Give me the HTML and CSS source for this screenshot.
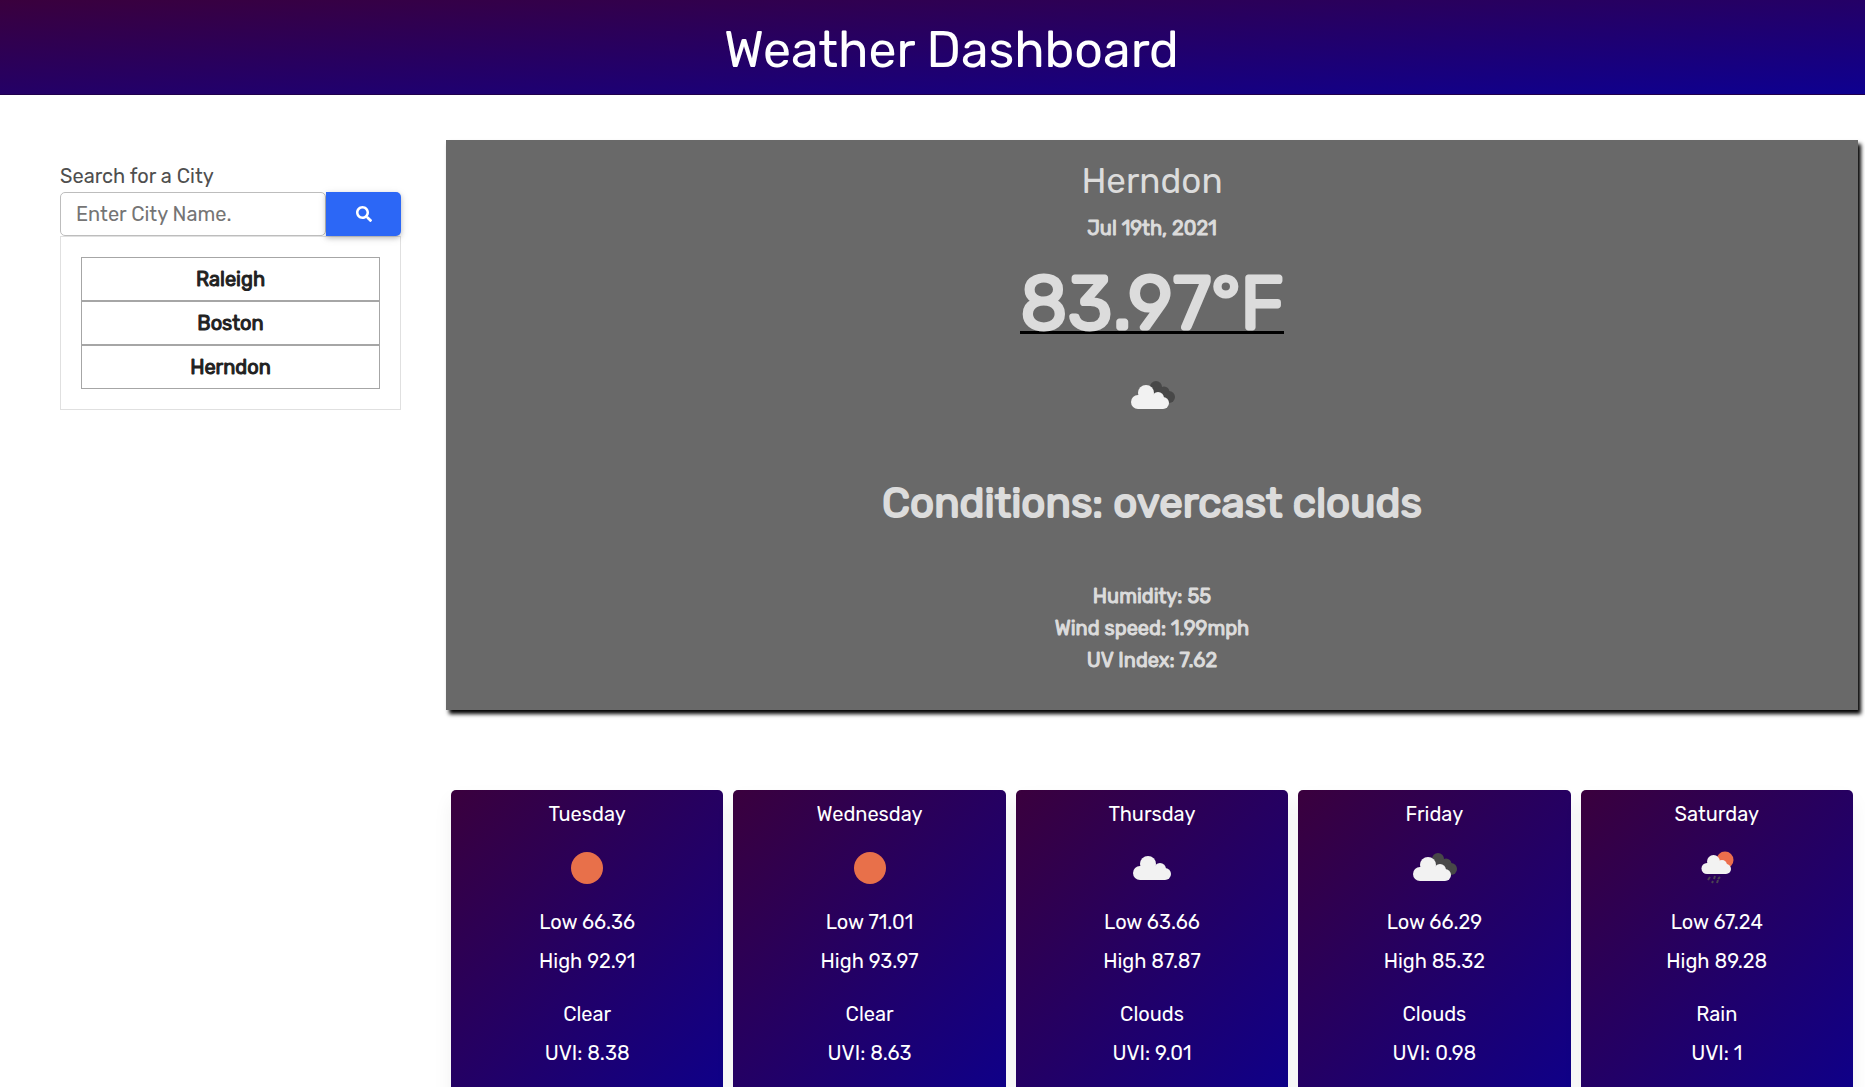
FILE: index.html
```html
<!DOCTYPE html>
<html lang="en">
<head>
<meta charset="utf-8">
<meta name="viewport" content="width=device-width, initial-scale=1">
<title>Weather Dashboard</title>
<link rel="stylesheet" href="styles.css">
</head>
<body>
<svg class="sprite" aria-hidden="true">
  <symbol id="cloud" viewBox="0 0 50 50">
    <g fill="#f2f2f2"><circle cx="21" cy="21" r="8"/><circle cx="33" cy="26" r="6"/><circle cx="13" cy="30" r="7"/><circle cx="38" cy="31" r="6"/><path d="M13 23h22l3 8v6H13z"/></g>
  </symbol>
  <symbol id="clouds" viewBox="0 0 50 50">
    <g fill="#484848"><circle cx="29" cy="16" r="6"/><circle cx="37" cy="21" r="5.500"/><circle cx="42" cy="26" r="6"/><path d="M25 18l10-2 8 8-3 7-12-3z"/></g>
    <g fill="#f2f2f2"><circle cx="19" cy="22" r="8"/><circle cx="31" cy="27" r="6"/><circle cx="11" cy="31" r="7"/><circle cx="36" cy="32" r="6"/><path d="M11 24h22l3 8v6H11z"/></g>
  </symbol>
  <symbol id="sun" viewBox="0 0 50 50">
    <circle cx="25" cy="25" r="16" fill="#e8704a"/>
  </symbol>
  <symbol id="rain" viewBox="0 0 50 50">
    <circle cx="33" cy="17" r="8.5" fill="#ec6e4c"/>
    <g fill="#f2f2f2"><circle cx="21.5" cy="18.5" r="6.5"/><circle cx="30" cy="22" r="5"/><circle cx="15" cy="25.500" r="5.500"/><circle cx="34" cy="26" r="5"/><path d="M15 20h17l2 6v5H15z"/></g>
    <path d="M18 34l-2 3M23 33l-1 3M28 34l-2 2M21 38l-1 2M26 37l-1 3" stroke="#4b4352" stroke-width="2" fill="none"/>
  </symbol>
</svg>

<header class="header"><h1 class="title">Weather Dashboard</h1></header>

<div class="layout">
  <aside class="sidebar">
    <form class="search">
      <label class="label" for="city">Search for a City</label>
      <div class="search-row">
        <input class="input" id="city" type="text" placeholder="Enter City Name.">
        <button class="search-button" type="button" aria-label="Search">
          <svg width="16" height="16" viewBox="0 0 512 512" fill="currentColor" aria-hidden="true"><path d="M505 442.700L405.300 343c-4.500-4.500-10.600-7-17-7H372c27.600-35.300 44-79.700 44-128C416 93.100 322.900 0 208 0S0 93.100 0 208s93.100 208 208 208c48.300 0 92.700-16.400 128-44v16.300c0 6.400 2.500 12.500 7 17l99.700 99.700c9.400 9.400 24.600 9.400 33.900 0l28.300-28.300c9.400-9.400 9.400-24.600.1-34zM208 336c-70.700 0-128-57.200-128-128 0-70.700 57.200-128 128-128 70.700 0 128 57.200 128 128 0 70.700-57.200 128-128 128z"/></svg>
        </button>
      </div>
    </form>
    <div class="history">
      <button class="city" type="button">Raleigh</button>
      <button class="city" type="button">Boston</button>
      <button class="city" type="button">Herndon</button>
    </div>
  </aside>

  <main class="main">
    <section class="current">
      <h2 class="place">Herndon</h2>
      <p class="date">Jul 19th, 2021</p>
      <p class="temp">83.97°F</p>
      <svg class="icon" role="img" aria-label="Overcast clouds"><use href="#clouds"/></svg>
      <h3 class="conditions">Conditions: overcast clouds</h3>
      <p class="stat">Humidity: 55</p>
      <p class="stat">Wind speed: 1.99mph</p>
      <p class="stat">UV Index: 7.62</p>
    </section>

    <section class="forecast">
      <article class="card">
        <h4 class="day">Tuesday</h4>
        <svg class="icon" role="img" aria-label="Clear"><use href="#sun"/></svg>
        <div class="range"><p>Low 66.36</p><p>High 92.91</p></div>
        <div class="range"><p>Clear</p><p>UVI: 8.38</p></div>
      </article>
      <article class="card">
        <h4 class="day">Wednesday</h4>
        <svg class="icon" role="img" aria-label="Clear"><use href="#sun"/></svg>
        <div class="range"><p>Low 71.01</p><p>High 93.97</p></div>
        <div class="range"><p>Clear</p><p>UVI: 8.63</p></div>
      </article>
      <article class="card">
        <h4 class="day">Thursday</h4>
        <svg class="icon" role="img" aria-label="Clouds"><use href="#cloud"/></svg>
        <div class="range"><p>Low 63.66</p><p>High 87.87</p></div>
        <div class="range"><p>Clouds</p><p>UVI: 9.01</p></div>
      </article>
      <article class="card">
        <h4 class="day">Friday</h4>
        <svg class="icon" role="img" aria-label="Clouds"><use href="#clouds"/></svg>
        <div class="range"><p>Low 66.29</p><p>High 85.32</p></div>
        <div class="range"><p>Clouds</p><p>UVI: 0.98</p></div>
      </article>
      <article class="card">
        <h4 class="day">Saturday</h4>
        <svg class="icon" role="img" aria-label="Rain"><use href="#rain"/></svg>
        <div class="range"><p>Low 67.24</p><p>High 89.28</p></div>
        <div class="range"><p>Rain</p><p>UVI: 1</p></div>
      </article>
    </section>
  </main>
</div>
</body>
</html>
```
FILE: styles.css
```css
* { box-sizing: border-box; }

html { scrollbar-width: none; }

body {
  margin: 0;
  background: #fff;
  color: #212121;
  font: 400 20px/32px Rubik, Roboto, "Liberation Sans", sans-serif;
}

h1, h2, h3, h4, p { margin: 0; font-weight: 400; }

.sprite { display: none; }

.header {
  padding: 18px 0 12px 38px;
  background: linear-gradient(to bottom right, #3a003d, #0e0090);
  border-bottom: 1px solid #20004c;
  color: #fff;
  text-align: center;
}

.title { font-size: 50px; line-height: 64px; }

.layout {
  display: grid;
  grid-template-columns: 341px minmax(0, 1fr);
  gap: 45px;
  padding: 45px 7px 24px 60px;
}

.sidebar { padding-top: 20px; }

.label {
  display: block;
  color: #4f4f4f;
}

.search-row { display: flex; height: 44px; }

.input {
  flex: 1;
  min-width: 0;
  padding: 0 15px;
  border: 1px solid #bdbdbd;
  border-radius: 5px;
  background: #fff;
  color: #4f4f4f;
  font: inherit;
}

.input::placeholder { color: #757575; opacity: 1; }

.search-button {
  display: flex;
  align-items: center;
  justify-content: center;
  width: 75px;
  border: 0;
  border-radius: 0 5px 5px 0;
  background: #2c67f6;
  box-shadow: 0 2px 5px rgba(0, 0, 0, .2), 0 2px 10px rgba(0, 0, 0, .1);
  color: #fff;
}

.history {
  display: flex;
  flex-direction: column;
  padding: 20px;
  border: 1px solid #e0e0e0;
}

.city {
  height: 44px;
  border: 1px solid #a6a6a6;
  background: #fff;
  color: #212121;
  font: inherit;
}

/* Thickens the regular weight without widening the letters */
.city, .date, .stat { -webkit-text-stroke: 1px currentColor; }

.current {
  display: flex;
  flex-direction: column;
  align-items: center;
  padding: 20px 20px 34px;
  background: #696969;
  box-shadow: 3px 4px 4px #000;
  color: #dcdcdc;
}

.place { font-size: 35px; line-height: 42px; }

.date { margin-top: 10px; }

.temp {
  margin-top: 33px;
  border-bottom: 3px solid #000;
  font-size: 75px;
  line-height: 54px;
  -webkit-text-stroke: 3px currentColor;
}

.icon { display: block; width: 50px; height: 50px; }

.current .icon { margin-top: 37px; }

.conditions {
  margin: 54px 0 49px;
  font-size: 42px;
  line-height: 56px;
  -webkit-text-stroke: 2px currentColor;
}

.forecast {
  display: grid;
  grid-template-columns: repeat(5, minmax(0, 1fr));
  gap: 10px;
  padding: 80px 5px 0;
}

.card {
  display: flex;
  flex-direction: column;
  align-items: center;
  padding: 8px 8px 32px;
  border-radius: 5px;
  background: linear-gradient(135deg, #3a003d, #0e008a);
  box-shadow: 0 10px 20px rgba(0, 0, 0, .06);
  color: #fff;
  text-align: center;
}

.day { font-size: 20px; }

.card .icon { margin-top: 13px; }

.range {
  display: grid;
  gap: 7px;
  margin-top: 13px;
}

.range + .range { margin-top: 21px; }
```
